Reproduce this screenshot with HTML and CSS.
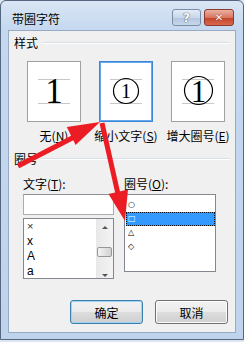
FILE: index.html
```html
<!DOCTYPE html>
<html lang="zh-CN">
<head>
    <meta charset="UTF-8">
    <title>带圈字符</title>
    <link rel="stylesheet" href="styles.css">
</head>
<body>
    <div class="window">
        <div class="titlebar">
            <span class="title">带圈字符</span>
            <div class="caption-btns">
                <span class="cap-btn help">?</span>
                <span class="cap-btn close">✕</span>
            </div>
        </div>

        <div class="client">
            <div class="group-title"><span>样式</span><span class="rule"></span></div>

            <div class="styles-row">
                <div class="style-option">
                    <div class="preview">
                        <svg width="52" height="59" viewBox="0 0 52 59">
                            <line x1="10" y1="17.5" x2="42" y2="17.5" stroke="#c8c8c8"/>
                            <line x1="10" y1="41.5" x2="42" y2="41.5" stroke="#c8c8c8"/>
                            <text x="26" y="41" text-anchor="middle" class="digit">1</text>
                        </svg>
                    </div>
                    <span class="option-label">无(<u>N</u>)</span>
                </div>
                <div class="style-option">
                    <div class="preview selected">
                        <svg width="52" height="59" viewBox="0 0 52 59">
                            <line x1="10" y1="17.5" x2="42" y2="17.5" stroke="#c8c8c8"/>
                            <line x1="10" y1="41.5" x2="42" y2="41.5" stroke="#c8c8c8"/>
                            <circle cx="26" cy="29" r="12.5" fill="none" stroke="#000" stroke-width="1.2"/>
                            <text x="26" y="36" text-anchor="middle" class="digit small">1</text>
                        </svg>
                    </div>
                    <span class="option-label">缩小文字(<u>S</u>)</span>
                </div>
                <div class="style-option">
                    <div class="preview">
                        <svg width="52" height="59" viewBox="0 0 52 59">
                            <line x1="10" y1="17.5" x2="42" y2="17.5" stroke="#c8c8c8"/>
                            <line x1="10" y1="41.5" x2="42" y2="41.5" stroke="#c8c8c8"/>
                            <circle cx="26.5" cy="28.5" r="14" fill="none" stroke="#000" stroke-width="1.2"/>
                            <text x="26.5" y="40" text-anchor="middle" class="digit mid">1</text>
                        </svg>
                    </div>
                    <span class="option-label">增大圈号(<u>E</u>)</span>
                </div>
            </div>

            <div class="group-title second"><span>圈号</span><span class="rule"></span></div>

            <div class="columns">
                <div class="col text-col">
                    <label class="field-label">文字(<u>T</u>):</label>
                    <div class="textbox"></div>
                    <div class="listbox text-list">
                        <ul class="items">
                            <li class="thin">×</li>
                            <li>x</li>
                            <li>A</li>
                            <li>a</li>
                        </ul>
                        <div class="scrollbar">
                            <span class="sb-btn up"><i></i></span>
                            <span class="thumb"></span>
                            <span class="sb-btn down"><i></i></span>
                        </div>
                    </div>
                </div>
                <div class="col ring-col">
                    <label class="field-label">圈号(<u>O</u>):</label>
                    <div class="listbox ring-list">
                        <ul class="items">
                            <li>○</li>
                            <li class="selected">□</li>
                            <li>△</li>
                            <li>◇</li>
                        </ul>
                    </div>
                </div>
            </div>

            <div class="dialog-buttons">
                <span class="push-btn default">确定</span>
                <span class="push-btn">取消</span>
            </div>
        </div>

        <!-- annotation arrows drawn over the dialog -->
        <svg class="arrows" width="244" height="342" viewBox="0 0 244 342">
            <line x1="18" y1="166" x2="78" y2="135" stroke="#ec1c24" stroke-width="5"/>
            <polygon points="100,122 75.6,145 66.8,127" fill="#ec1c24"/>
            <line x1="102" y1="123" x2="118" y2="194" stroke="#ec1c24" stroke-width="5"/>
            <polygon points="125,221 128,189.5 108.5,194" fill="#ec1c24"/>
        </svg>
    </div>
</body>
</html>
```

FILE: styles.css
```css
body {
    margin: 0;
    background: #dce6f1;
    font-family: "Noto Sans CJK SC", "Noto Sans", sans-serif;
    font-size: 12px;
    color: #000;
}
.window {
    position: relative;
    width: 244px;
    height: 340px;
    box-sizing: border-box;
    border: 1px solid #55677f;
    border-radius: 6px 6px 0 0;
    background: linear-gradient(#d9e6f5, #c5d8ef 28px, #bfd3ec);
}
.titlebar {
    height: 29px;
    display: flex;
    align-items: flex-start;
    padding: 0 9px 0 11px;
}
.title {
    flex: 1;
    margin-top: 11px;
    line-height: 14px;
}
.caption-btns {
    display: flex;
    gap: 3px;
    margin-top: 8px;
}
.cap-btn {
    height: 17px;
    box-sizing: border-box;
    border-radius: 3px;
    display: flex;
    align-items: center;
    justify-content: center;
    font-family: "DejaVu Sans", sans-serif;
    font-weight: bold;
    color: #fff;
}
.cap-btn.help {
    width: 29px;
    border: 1px solid #7b8ea8;
    background: linear-gradient(#e4ecf6, #c9d7e9 50%, #b3c6de 51%, #c7d7ea);
    font-size: 12px;
    text-shadow: 0 0 1px #445, 0 0 1px #445;
}
.cap-btn.close {
    width: 30px;
    border: 1px solid #8b3a2b;
    background: linear-gradient(#eab1a2, #d8765f 50%, #c2432a 51%, #d9684d);
    font-size: 10px;
    text-shadow: 0 0 1px #5a1a10;
}
.client {
    margin: 0 7px;
    height: 303px;
    box-sizing: border-box;
    border: 1px solid #98abc5;
    background: #f0f0f0;
    padding: 5px 5px 0;
}
.group-title {
    display: flex;
    align-items: center;
    gap: 4px;
    line-height: 14px;
}
.group-title.second {
    margin-top: 9px;
}
.rule {
    flex: 1;
    border-top: 1px solid #d5dfe5;
    border-bottom: 1px solid #fff;
}
.styles-row {
    display: flex;
    gap: 18px;
    padding-left: 13px;
    margin-top: 11px;
}
.style-option {
    width: 54px;
    display: flex;
    flex-direction: column;
    align-items: center;
}
.preview {
    width: 54px;
    height: 61px;
    box-sizing: border-box;
    border: 1px solid #a0a0a0;
    background: #fff;
}
.preview svg {
    display: block;
}
.preview.selected {
    border-color: #3a86d8;
    box-shadow: inset 0 0 0 1px #66a8ec;
}
.digit {
    font-family: "Liberation Serif", serif;
    font-size: 35px;
    fill: #000;
}
.digit.small {
    font-size: 20px;
}
.digit.mid {
    font-size: 31px;
}
.option-label {
    margin-top: 7px;
    line-height: 14px;
    white-space: nowrap;
}
.columns {
    display: flex;
    align-items: flex-start;
    gap: 10px;
    padding-left: 9px;
    margin-top: 11px;
}
.col {
    display: flex;
    flex-direction: column;
}
.text-col {
    width: 91px;
}
.ring-col {
    width: 92px;
}
.field-label {
    line-height: 14px;
    margin-bottom: 3px;
}
.textbox {
    height: 21px;
    box-sizing: border-box;
    border: 1px solid #abadb3;
    border-top-color: #8e9299;
    background: #fff;
}
.listbox {
    box-sizing: border-box;
    border: 1px solid #828790;
    background: #fff;
    overflow: hidden;
}
.text-list {
    margin-top: 3px;
    height: 61px;
    display: flex;
}
.ring-list {
    height: 78px;
}
.items {
    list-style: none;
    margin: 0;
    padding: 0;
    flex: 1;
}
.text-list li {
    height: 15px;
    line-height: 15px;
    padding-left: 3px;
    font-family: "Liberation Sans", sans-serif;
    font-size: 12px;
}
.text-list li.thin {
    font-size: 11px;
    color: #333;
}
.scrollbar {
    width: 17px;
    display: flex;
    flex-direction: column;
    background: linear-gradient(90deg, #e8e8e8, #f4f4f4);
}
.sb-btn {
    height: 17px;
    display: flex;
    justify-content: center;
}
.sb-btn.up {
    align-items: center;
}
.sb-btn.down {
    margin-top: auto;
    align-items: flex-end;
    padding-bottom: 1px;
}
.sb-btn i {
    width: 0;
    height: 0;
    border-left: 3px solid transparent;
    border-right: 3px solid transparent;
}
.sb-btn.up i {
    border-bottom: 3px solid #555;
}
.sb-btn.down i {
    border-top: 3px solid #555;
}
.thumb {
    margin: 11px 0 0 1px;
    height: 10px;
    width: 15px;
    box-sizing: border-box;
    border: 1px solid #979797;
    border-radius: 2px;
    background: linear-gradient(90deg, #f4f4f4, #e2e2e2 50%, #d2d2d2);
}
.ring-list .items {
    padding-top: 3px;
}
.ring-list li {
    height: 14px;
    line-height: 14px;
    padding-left: 3px;
    font-family: "DejaVu Sans", sans-serif;
    font-size: 8px;
}
.ring-list li.selected {
    margin-left: 1px;
    padding-left: 1px;
    box-sizing: border-box;
    background: #3399ff;
    border: 1px dotted #111;
    line-height: 12px;
    color: #fff;
}
.dialog-buttons {
    display: flex;
    justify-content: flex-end;
    gap: 12px;
    padding-right: 2px;
    margin-top: 21px;
}
.push-btn {
    width: 73px;
    height: 24px;
    box-sizing: border-box;
    border: 1px solid #707070;
    border-radius: 3px;
    background: linear-gradient(#f2f2f2, #ebebeb 50%, #dddddd 51%, #cfcfcf);
    display: flex;
    align-items: center;
    justify-content: center;
    box-shadow: inset 0 0 0 1px #fcfcfc;
}
.push-btn.default {
    border-color: #3c7fb1;
    box-shadow: inset 0 0 0 1px #9fd5f1;
}
.arrows {
    position: absolute;
    left: -1px;
    top: -1px;
    pointer-events: none;
}
```
